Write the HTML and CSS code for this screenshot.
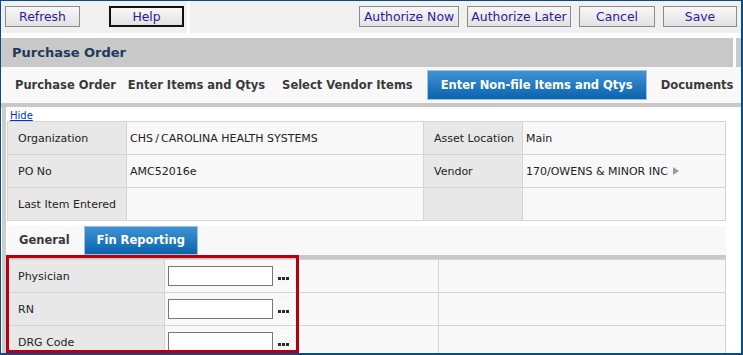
FILE: index.html
```html
<!DOCTYPE html>
<html lang="en">
<head>
    <meta charset="UTF-8">
    <title>Purchase Order</title>
    <link rel="stylesheet" href="styles.css">
</head>
<body>
    <div class="window">
        <div class="toolbar">
            <div class="toolbar-left">
                <button class="btn btn-refresh">Refresh</button>
                <button class="btn btn-help">Help</button>
            </div>
            <div class="toolbar-sep"></div>
            <div class="toolbar-right">
                <button class="btn btn-auth-now">Authorize Now</button>
                <button class="btn btn-auth-later">Authorize Later</button>
                <button class="btn btn-cancel">Cancel</button>
                <button class="btn btn-save">Save</button>
            </div>
        </div>

        <div class="page-title">Purchase Order</div>

        <div class="tabs">
            <span class="tab">Purchase Order</span>
            <span class="tab">Enter Items and Qtys</span>
            <span class="tab">Select Vendor Items</span>
            <span class="tab tab-active">Enter Non-file Items and Qtys</span>
            <span class="tab">Documents</span>
        </div>

        <div class="content">
            <div class="panel">
                <div class="hide-row"><a href="#" class="hide-link">Hide</a></div>

                <table class="info">
                    <colgroup>
                        <col style="width: 119px">
                        <col style="width: 297px">
                        <col style="width: 99px">
                        <col style="width: 203px">
                    </colgroup>
                    <tr>
                        <td class="lbl">Organization</td>
                        <td class="val">CHS&thinsp;/&thinsp;CAROLINA HEALTH SYSTEMS</td>
                        <td class="lbl">Asset Location</td>
                        <td class="val">Main</td>
                    </tr>
                    <tr>
                        <td class="lbl">PO No</td>
                        <td class="val">AMC52016e</td>
                        <td class="lbl">Vendor</td>
                        <td class="val">170/OWENS &amp; MINOR INC
                            <svg class="arrow" width="6" height="8" viewBox="0 0 6 8"><polygon points="0,0 6,4 0,8" fill="#9a9a9a"/></svg>
                        </td>
                    </tr>
                    <tr>
                        <td class="lbl">Last Item Entered</td>
                        <td class="val"></td>
                        <td class="lbl"></td>
                        <td class="val"></td>
                    </tr>
                </table>

                <div class="subtabs">
                    <span class="subtab">General</span>
                    <span class="subtab subtab-active">Fin Reporting</span>
                </div>

                <table class="fin">
                    <colgroup>
                        <col style="width: 157px">
                        <col style="width: 274px">
                        <col style="width: 287px">
                    </colgroup>
                    <tr>
                        <td class="lbl">Physician</td>
                        <td class="val"><input type="text" class="field"><span class="lookup"><svg width="11" height="3" viewBox="0 0 11 3"><rect x="0" y="0" width="3" height="3"/><rect x="4" y="0" width="3" height="3"/><rect x="8" y="0" width="3" height="3"/></svg></span></td>
                        <td class="val"></td>
                    </tr>
                    <tr>
                        <td class="lbl">RN</td>
                        <td class="val"><input type="text" class="field"><span class="lookup"><svg width="11" height="3" viewBox="0 0 11 3"><rect x="0" y="0" width="3" height="3"/><rect x="4" y="0" width="3" height="3"/><rect x="8" y="0" width="3" height="3"/></svg></span></td>
                        <td class="val"></td>
                    </tr>
                    <tr>
                        <td class="lbl">DRG Code</td>
                        <td class="val"><input type="text" class="field"><span class="lookup"><svg width="11" height="3" viewBox="0 0 11 3"><rect x="0" y="0" width="3" height="3"/><rect x="4" y="0" width="3" height="3"/><rect x="8" y="0" width="3" height="3"/></svg></span></td>
                        <td class="val"></td>
                    </tr>
                </table>
            </div>
        </div>

        <!-- annotation box over the fin reporting fields -->
        <div class="highlight"></div>
    </div>
</body>
</html>
```

FILE: styles.css
```css
body {
    margin: 0;
    background: #ffffff;
    font-family: "DejaVu Sans", Verdana, sans-serif;
    color: #222222;
}
.window {
    position: relative;
    width: 743px;
    height: 355px;
    box-sizing: border-box;
    border: 1px solid #0c4a88;
    border-right-width: 2px;
    border-bottom-width: 2px;
    overflow: hidden;
    background: #ffffff;
}

/* toolbar */
.toolbar {
    display: flex;
    height: 32px;
    background: #f0f0f0;
}
.toolbar-left {
    display: flex;
    gap: 29px;
    width: 182px;
    padding: 5px 0 0 4px;
}
.toolbar-sep {
    width: 3px;
    background: #ffffff;
}
.toolbar-right {
    flex: 1;
    display: flex;
    justify-content: flex-end;
    gap: 8px;
    padding: 5px 4px 0 0;
}
.btn {
    height: 21px;
    padding: 0;
    border: 1px solid #8c8c8c;
    background: linear-gradient(#f7f7f7, #e2e2e2);
    color: #2c1a9c;
    font-family: "DejaVu Sans", Verdana, sans-serif;
    font-size: 12.4px;
    line-height: 19px;
}
.btn-refresh, .btn-help { width: 75px; }
.btn-help { border: 2px solid #111111; line-height: 17px; }
.btn-auth-now { width: 100px; }
.btn-auth-later { width: 104px; }
.btn-cancel { width: 76px; }
.btn-save { width: 74px; }

.page-title {
    margin-top: 5px;
    height: 29px;
    line-height: 30px;
    padding-left: 11px;
    background: linear-gradient(to right, #c8c9c8 732px, #ffffff 732px, #ffffff 735px, #c8c9c8 735px);
    color: #1f3a5c;
    font-size: 13px;
    font-weight: bold;
}

/* main tabs */
.tabs {
    display: flex;
    height: 36px;
    padding: 3px 0 0 8px;
    box-sizing: border-box;
    background: #f8f8f8;
    white-space: nowrap;
}
.tab {
    flex-shrink: 0;
    height: 30px;
    line-height: 30px;
    padding: 0 6px;
    color: #3a3a3a;
    font-size: 11.5px;
    font-weight: bold;
}
.tab:nth-child(3) { margin-left: 5px; }
.tab-active {
    margin: 0 8px 0 8px;
    padding: 0 13px;
    box-sizing: border-box;
    border: 1px solid #9fc2e2;
    background: linear-gradient(#3f92d5, #0b63ad);
    color: #ffffff;
    line-height: 28px;
}

/* content panel */
.content {
    border-top: 4px solid #c8c8c8;
    padding-left: 1px;
}
.panel {
    width: 719px;
    border-left: 4px solid #cdcdcd;
    padding-left: 1px;
    background: #ffffff;
}
.hide-row {
    height: 14px;
    padding-left: 3px;
    line-height: 13px;
}
.hide-link {
    color: #0033cc;
    font-size: 10px;
}

table {
    border-collapse: collapse;
    width: 718px;
    table-layout: fixed;
    font-size: 11px;
}
td {
    height: 32px;
    padding: 0 0 0 10px;
    border: 1px solid #d4d4d4;
    vertical-align: middle;
    white-space: nowrap;
}
.lbl { background: #e8e8e8; }
.val { background: #f8f8f8; }
.info td:nth-child(2), .info td:nth-child(4) { padding-left: 3px; }
.info td:nth-child(3) { padding-left: 10px; }
.arrow { margin-left: 2px; vertical-align: 0; }

/* sub tabs */
.subtabs {
    display: flex;
    height: 29px;
    margin-top: 5px;
    background: #f8f8f8;
    border-bottom: 4px solid #c8c8c8;
    white-space: nowrap;
}
.subtab {
    padding: 0 12px;
    line-height: 29px;
    color: #3a3a3a;
    font-size: 11.5px;
    font-weight: bold;
}
.subtab:first-child { padding-right: 14px; }
.subtab-active {
    box-sizing: border-box;
    height: 29px;
    line-height: 27px;
    border: 1px solid #9fc2e2;
    background: linear-gradient(#3f92d5, #0b63ad);
    color: #ffffff;
}

.fin td:nth-child(2) { padding-left: 3px; }
.field {
    width: 105px;
    height: 20px;
    box-sizing: border-box;
    margin: 0;
    border: 1px solid #787878;
    background: #ffffff;
    vertical-align: middle;
}
.lookup {
    display: inline-block;
    width: 18px;
    height: 18px;
    margin-left: 1px;
    box-sizing: border-box;
    border: 1px solid #ffffff;
    background: #f8f8f8;
    text-align: center;
    line-height: 16px;
    vertical-align: middle;
    position: relative;
    top: 2px;
}
.lookup svg { fill: #2a2a2a; vertical-align: middle; }

.highlight {
    position: absolute;
    left: 5px;
    top: 254px;
    width: 293px;
    height: 98px;
    box-sizing: border-box;
    border: 3px solid #b5000f;
}
```
